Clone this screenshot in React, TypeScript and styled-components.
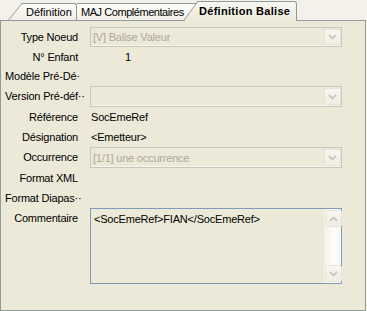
import React from "react";
import styled, { createGlobalStyle } from "styled-components";

const GlobalStyle = createGlobalStyle`
  html, body { margin: 0; padding: 0; background: #f3f1e9; }
  body { font-family: "Liberation Sans", Arial, sans-serif; font-size: 11px; color: #000; }
`;

const Root = styled.div`
  width: 367px;
  height: 311px;
  overflow: hidden;
`;

const TabStrip = styled.div`
  position: relative;
  z-index: 1;
  display: flex;
  align-items: flex-end;
  height: 20px;
  padding-left: 22px;
  box-sizing: border-box;
`;

const Tab = styled.div<{ $active?: boolean; $width: number; $z: number; $shift?: number; $pad: number; $ls?: number; $slant?: boolean }>`
  position: relative;
  z-index: ${(p) => p.$z};
  box-sizing: border-box;
  flex: none;
  width: ${(p) => p.$width}px;
  height: ${(p) => (p.$active ? 20 : 17)}px;
  margin-left: ${(p) => p.$shift ?? 0}px;
  margin-bottom: ${(p) => (p.$active ? -1 : 0)}px;
  padding: 0 0 ${(p) => (p.$active ? 1 : 0)}px ${(p) => p.$pad}px;
  border-top: 1px solid #919b9c;
  border-right: 1px solid #919b9c;
  border-top-right-radius: 3px;
  background: ${(p) =>
    p.$active ? "linear-gradient(#f8f7f2, #ece9d8)" : "linear-gradient(#fdfdfb, #f0eee5)"};
  display: flex;
  align-items: center;
  white-space: nowrap;
  font-size: 11px;
  font-weight: ${(p) => (p.$active ? 700 : 400)};
  letter-spacing: ${(p) => p.$ls ?? 0}px;
  &::before {
    content: "";
    display: ${(p) => (p.$slant === false ? "none" : "block")};
    position: absolute;
    z-index: -1;
    left: -14px;
    top: -1px;
    bottom: 0;
    width: 14px;
    border-left: 1px solid #919b9c;
    border-top: 1px solid #919b9c;
    background: inherit;
    transform-origin: bottom left;
    transform: skewX(${(p) => (p.$active ? -36 : -39.5)}deg);
  }
`;

const Panel = styled.div`
  box-sizing: border-box;
  width: 366px;
  height: 291px;
  border: 1px solid #919b9c;
  background: #ece9d8;
  padding: 6px 0 0 4px;
  display: grid;
  grid-template-columns: 81px 252px;
  column-gap: 4px;
  grid-template-rows: 20px 20px 19px 21px 20px 20px 21px 20px 20px 76px;
  align-items: center;
`;

const Label = styled.div<{ $top?: boolean }>`
  text-align: right;
  white-space: nowrap;
  padding-right: 8px;
  letter-spacing: -0.2px;
  line-height: 13px;
  align-self: ${(p) => (p.$top ? "start" : "center")};
  padding-top: ${(p) => (p.$top ? 4 : 0)}px;
`;

const Value = styled.div<{ $indent?: number; $width?: number }>`
  padding-left: ${(p) => p.$indent ?? 1}px;
  width: ${(p) => (p.$width ? `${p.$width}px` : "auto")};
  text-align: ${(p) => (p.$width ? "right" : "left")};
  white-space: nowrap;
  letter-spacing: -0.2px;
  line-height: 13px;
`;

const Combo = styled.div`
  box-sizing: border-box;
  align-self: stretch;
  display: flex;
  align-items: stretch;
  border: 1px solid #c9c7ba;
  box-shadow: inset 0 -1px 0 #f6f5ef;
  background: #ece9d8;
`;

const ComboText = styled.div`
  flex: 1;
  display: flex;
  align-items: center;
  padding-left: 2px;
  color: #aca899;
  letter-spacing: -0.2px;
  white-space: nowrap;
`;

const ArrowButton = styled.div<{ $h?: number }>`
  box-sizing: border-box;
  width: 17px;
  height: ${(p) => (p.$h ? `${p.$h}px` : "auto")};
  margin: 1px;
  display: flex;
  align-items: center;
  justify-content: center;
  background: linear-gradient(#f7f6f1, #efede4);
  border: 1px solid #e6e4d9;
  border-radius: 2px;
  flex: none;
`;

const ComboButton = styled(ArrowButton)`
  margin: 1px 0 1px 0;
`;

const Memo = styled.div`
  box-sizing: border-box;
  align-self: stretch;
  display: flex;
  border: 1px solid #7f9db9;
  background: #ece9d8;
`;

const MemoText = styled.div`
  flex: 1;
  padding: 4px 3px;
  letter-spacing: -0.2px;
  line-height: 13px;
  white-space: nowrap;
`;

const ScrollBar = styled.div`
  width: 17px;
  display: flex;
  flex-direction: column;
  background: linear-gradient(90deg, #f3f2ec, #fefefe 60%, #f7f6f1);
`;

const ScrollTrack = styled.div`
  flex: 1;
`;

const Chevron = ({ up }: { up?: boolean }) => (
  <svg width="9" height="6" viewBox="0 0 9 6">
    <polyline
      points={up ? "1,5 4.5,1.5 8,5" : "1,1 4.5,4.5 8,1"}
      fill="none"
      stroke="#c9c7ba"
      strokeWidth="1.8"
    />
  </svg>
);

export default function App() {
  return (
    <Root>
      <GlobalStyle />
      <TabStrip>
        <Tab $width={55} $z={3} $pad={4}>Définition</Tab>
        <Tab $width={125} $z={2} $pad={4} $ls={-0.45} $slant={false}>MAJ Complémentaires</Tab>
        <Tab $active $width={100} $z={5} $pad={2} $shift={-5} $ls={0.3}>Définition Balise</Tab>
      </TabStrip>
      <Panel>
        <Label>Type Noeud</Label>
        <Combo>
          <ComboText>[V] Balise Valeur</ComboText>
          <ComboButton><Chevron /></ComboButton>
        </Combo>

        <Label>N° Enfant</Label>
        <Value $indent={0} $width={41}>1</Value>

        <Label>Modèle Pré-Dé·</Label>
        <Value />

        <Label>Version Pré-déf··</Label>
        <Combo>
          <ComboText />
          <ComboButton><Chevron /></ComboButton>
        </Combo>

        <Label>Référence</Label>
        <Value>SocEmeRef</Value>

        <Label>Désignation</Label>
        <Value>&lt;Emetteur&gt;</Value>

        <Label>Occurrence</Label>
        <Combo>
          <ComboText>[1/1] une occurrence</ComboText>
          <ComboButton><Chevron /></ComboButton>
        </Combo>

        <Label>Format XML</Label>
        <Value />

        <Label>Format Diapas··</Label>
        <Value />

        <Label $top>Commentaire</Label>
        <Memo>
          <MemoText>&lt;SocEmeRef&gt;FIAN&lt;/SocEmeRef&gt;</MemoText>
          <ScrollBar>
            <ArrowButton $h={17}><Chevron up /></ArrowButton>
            <ScrollTrack />
            <ArrowButton $h={17}><Chevron /></ArrowButton>
          </ScrollBar>
        </Memo>
      </Panel>
    </Root>
  );
}
